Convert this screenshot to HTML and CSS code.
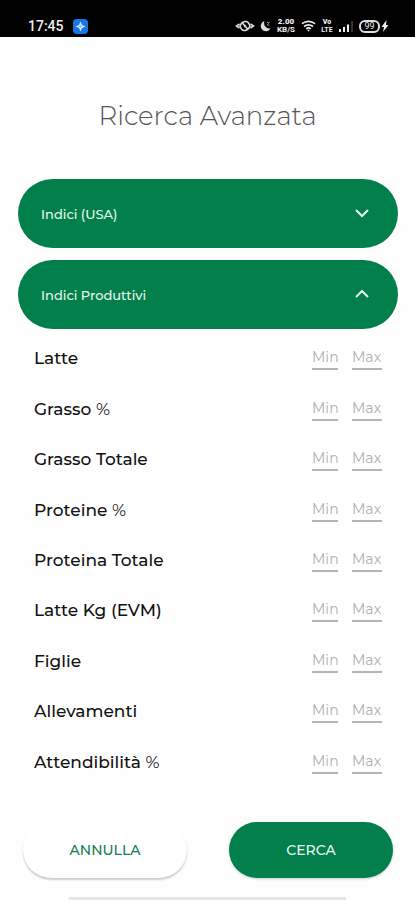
FILE: index.html
```html
<!DOCTYPE html>
<html lang="it">
<head>
<meta charset="utf-8">
<meta name="viewport" content="width=device-width, initial-scale=1">
<title>Ricerca Avanzata</title>
<link rel="stylesheet" href="styles.css">
</head>
<body>
<header class="status">
  <span class="time">17:45</span>
  <svg class="app" width="15" height="15" viewBox="0 0 15 15"><rect width="15" height="15" rx="4" fill="#1976e8"/><path d="M7.500 2.500L9 6l3.500 1.500L9 9l-1.500 3.500L6 9 2.500 7.500 6 6z" fill="#d6eaff"/><path d="M7.500 6v3M6 7.500h3" stroke="#8cc2f8"/></svg>
  <div class="icons">
    <svg width="20" height="14" viewBox="0 0 20 14" fill="none" stroke="#ddd" stroke-width="1.600"><path d="M4.500 5L1.500 7l3 2M15.500 5l3 2-3 2"/><path d="M5 7Q6.500 3 10 2.500T15 7Q13.500 11 10 11.500T5 7z"/><path d="M7 3.500l6 7M9 7.500l2-1"/></svg>
    <svg width="11" height="14" viewBox="0 0 11 14"><path d="M4.500 2A5.200 5.200 0 1 0 10.500 9.500 5.500 5.500 0 0 1 4.500 2z" fill="#ddd"/><path d="M7 3.500h2.500L7 6h2.500" fill="none" stroke="#777"/></svg>
    <span class="speed"><b>2.00</b><span>KB/S</span></span>
    <svg width="15" height="14" viewBox="0 0 16 14" fill="none" stroke="#eee" stroke-width="1.800"><path d="M1 4.500Q8-.5 15 4.500M3.200 7.500q4.800-3.600 9.600 0M5.500 10q2.500-1.800 5 0"/><path d="M6.500 11h3L8 13z" fill="#eee" stroke="none"/></svg>
    <span class="speed volte"><b>Vo</b><span>LTE</span></span>
    <svg width="16" height="14" viewBox="0 0 16 14"><path d="M1 10h2v3H1zM5 8h2v5H5zM9 5.500h2V13H9z" fill="#eee"/><path d="M13 2h2v11h-2z" fill="#333"/></svg>
    <span class="power"><span class="battery">99</span><svg width="8" height="14" viewBox="0 0 8 14"><path d="M5.500 1L.5 8H3l-1 5 5.500-7H5z" fill="#eee"/></svg></span>
  </div>
</header>
<main>
  <h1>Ricerca Avanzata</h1>
  <form>
    <button class="panel" type="button" aria-expanded="false">Indici (USA)
      <svg width="16" height="10" viewBox="0 0 16 10"><path d="M2 1l6 6 6-6"/></svg></button>
    <button class="panel" type="button" aria-expanded="true">Indici Produttivi
      <svg width="16" height="10" viewBox="0 0 16 10"><path d="M2 7l6-6 6 6"/></svg></button>
    <div class="rows">
      <div class="row"><label for="f1">Latte</label><input id="f1" class="min" placeholder="Min"><input class="max" aria-label="Latte Max" placeholder="Max"></div>
      <div class="row"><label for="f2">Grasso <i>%</i></label><input id="f2" class="min" placeholder="Min"><input class="max" aria-label="Grasso % Max" placeholder="Max"></div>
      <div class="row"><label for="f3">Grasso Totale</label><input id="f3" class="min" placeholder="Min"><input class="max" aria-label="Grasso Totale Max" placeholder="Max"></div>
      <div class="row"><label for="f4">Proteine <i>%</i></label><input id="f4" class="min" placeholder="Min"><input class="max" aria-label="Proteine % Max" placeholder="Max"></div>
      <div class="row"><label for="f5">Proteina Totale</label><input id="f5" class="min" placeholder="Min"><input class="max" aria-label="Proteina Totale Max" placeholder="Max"></div>
      <div class="row"><label for="f6">Latte Kg (EVM)</label><input id="f6" class="min" placeholder="Min"><input class="max" aria-label="Latte Kg (EVM) Max" placeholder="Max"></div>
      <div class="row"><label for="f7">Figlie</label><input id="f7" class="min" placeholder="Min"><input class="max" aria-label="Figlie Max" placeholder="Max"></div>
      <div class="row"><label for="f8">Allevamenti</label><input id="f8" class="min" placeholder="Min"><input class="max" aria-label="Allevamenti Max" placeholder="Max"></div>
      <div class="row"><label for="f9">Attendibilità <i>%</i></label><input id="f9" class="min" placeholder="Min"><input class="max" aria-label="Attendibilità % Max" placeholder="Max"></div>
    </div>
    <div class="actions">
      <button class="cancel" type="button">ANNULLA</button>
      <button class="submit" type="button">CERCA</button>
    </div>
  </form>
</main>
<div class="home"></div>
</body>
</html>
```
FILE: styles.css
```css
* { box-sizing: border-box; }
body {
  margin: 0;
  min-height: 100vh;
  display: flex;
  flex-direction: column;
  background: #fefefe;
  color: #111;
  font-family: Montserrat, Inter, sans-serif;
}
button, input { font-family: inherit; }
.status {
  height: 37px;
  padding: 15px 26px 0 28px;
  display: flex;
  align-items: center;
  background: #000;
  color: #eee;
  font-family: Roboto, sans-serif;
}
.time { font-size: 14px; line-height: 20px; font-weight: 500; }
.app { margin-left: 9px; }
.icons { margin-left: auto; display: flex; align-items: center; gap: 5px; }
.speed {
  display: flex;
  flex-direction: column;
  align-items: center;
  width: 20px;
  font-size: 8px;
  font-weight: 700;
  line-height: 8px;
}
.volte { width: 12px; font-size: 7px; }
.power { display: flex; align-items: center; gap: 1px; }
.battery {
  width: 21px;
  border: 2px solid #ddd;
  border-radius: 6px;
  font-size: 9px;
  line-height: 9px;
  text-align: center;
}
main, form { flex: 1; display: flex; flex-direction: column; }
h1 {
  margin: 61px 0 44px;
  font-size: 26px;
  line-height: 37px;
  font-weight: 300;
  text-align: center;
  color: #555;
}
form { padding: 0 17px 0 18px; }
.panel {
  height: 69px;
  margin-bottom: 12px;
  padding: 0 28px 0 23px;
  display: flex;
  align-items: center;
  justify-content: space-between;
  border: 0;
  border-radius: 35px;
  background: #037f4b;
  color: #e6f7ee;
  font-size: 13px;
  font-weight: 500;
}
.panel svg { fill: none; stroke: #e6f7ee; stroke-width: 2; }
.panel[aria-expanded="true"] { margin-bottom: 4px; }
.rows {
  flex: 1;
  display: grid;
  grid-auto-rows: 1fr;
  padding: 0 16px;
}
.row { display: flex; align-items: center; }
label { flex: 1; font-size: 17px; line-height: 24px; font-weight: 500; }
label i { font-style: normal; font-weight: 400; }
input {
  height: 24px;
  margin-left: 14px;
  padding: 0;
  border: 0;
  border-bottom: 2px solid #b5b5b5;
  border-radius: 0;
  background: none;
  font-size: 14px;
  font-weight: 400;
}
input::placeholder { color: #b0b0b0; opacity: 1; }
.min { width: 26px; }
.max { width: 30px; }
.actions {
  display: grid;
  grid-template-columns: 1fr 1fr;
  gap: 42px;
  padding: 35px 5px 19px;
}
.actions button {
  height: 56px;
  border: 0;
  border-radius: 28px;
  font-size: 14px;
  font-weight: 500;
}
.cancel { background: #fff; color: #16804f; box-shadow: 0 2px 2px #0003; }
.submit { background: #037f4b; color: #e6f7ee; box-shadow: 0 1px 3px #0003; }
.home { height: 3px; margin: 0 69px; background: #e6e6e6; }
```
